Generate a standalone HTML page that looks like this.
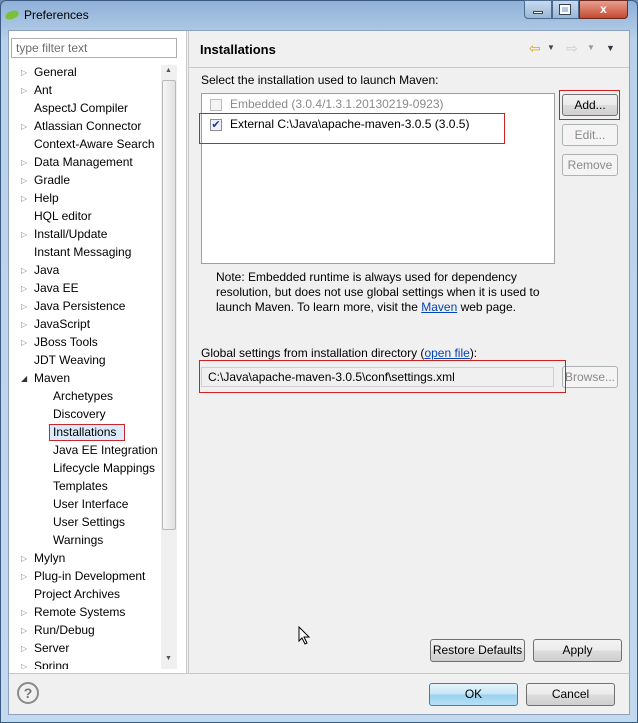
<!DOCTYPE html>
<html><head><style>
*{margin:0;padding:0;box-sizing:border-box}
body{width:638px;height:723px;overflow:hidden;font-family:"Liberation Sans",sans-serif;font-size:12px;color:#000;background:#6d8fb8;position:relative}
.frame{position:absolute;left:0;top:0;width:638px;height:723px;background:linear-gradient(#8fb0d8,#b9d1ea 40px,#c4d8ee);border:1px solid #3b5a82;border-radius:6px 6px 0 0}
.title{position:absolute;left:24px;top:8px;font-size:12px;color:#000}
.client{position:absolute;left:8px;top:30px;width:622px;height:685px;background:#f0f0f0;border:1px solid #8da2c0}
.abs{position:absolute}
.tree{left:0;top:0;width:178px;height:642px;background:#fff;border-right:1px solid #c8c8c8}
.row{position:absolute;height:18px;line-height:18px;white-space:nowrap}
.arr{position:absolute;color:#888;font-size:8px}
.btn{position:absolute;border:1px solid #707070;border-radius:3px;background:linear-gradient(#f2f2f2,#ebebeb 50%,#dddddd 51%,#cfcfcf);text-align:center;font-size:12px}
.dis{border-color:#adb2b5;background:#f4f4f4;color:#8a8a8a}
.red{position:absolute;border:1px solid #d02020 !important;background:transparent}
a{color:#0645ad;text-decoration:underline}
</style></head><body>
<div class="frame"></div>
<svg class="abs" style="left:4px;top:9px" width="16" height="12"><ellipse cx="8" cy="6" rx="7" ry="4" fill="#7cbf3a" transform="rotate(-20 8 6)"/></svg>
<div class="title">Preferences</div>
<div class="abs" style="left:524px;top:0;width:28px;height:19px;border:1px solid #4a6a90;border-radius:0 0 0 4px;background:linear-gradient(#c9daee,#9bb6d6)"></div>
<div class="abs" style="left:552px;top:0;width:27px;height:19px;border:1px solid #4a6a90;background:linear-gradient(#c9daee,#9bb6d6)"></div>
<div class="abs" style="left:579px;top:0;width:49px;height:19px;border:1px solid #6a2a20;border-radius:0 0 4px 0;background:linear-gradient(#e8a090,#c44a30);color:#fff;font-weight:bold;text-align:center;line-height:17px">x</div>
<div class="abs" style="left:533px;top:11px;width:10px;height:3px;background:#fff;border:1px solid #345"></div>
<div class="abs" style="left:560px;top:5px;width:10px;height:9px;border:2px solid #fff;outline:1px solid #345"></div>
<div class="client">
 <div class="abs tree"></div>
 <div class="abs" style="left:2px;top:7px;width:166px;height:20px;border:1px solid #abadb3;background:#fff;color:#6d6d6d;padding:2px 4px">type filter text</div>
 <div class="abs" style="left:152px;top:34px;width:16px;height:604px;background:#f0f0f0"></div>
 <div class="abs" style="left:153px;top:49px;width:14px;height:450px;border:1px solid #b8b8b8;border-radius:2px;background:linear-gradient(90deg,#f5f5f5,#e2e2e2)"></div>
 <div class="abs" style="left:156px;top:36px;font-size:7px;color:#555">▲</div>
 <div class="abs" style="left:156px;top:624px;font-size:7px;color:#555">▼</div>
 <div class="abs" style="left:0;top:34px;width:152px;height:604px;overflow:hidden">
 <div class="arr" style="left:12px;top:3px">▷</div><div class="row" style="left:25px;top:-2px">General</div>
 <div class="arr" style="left:12px;top:21px">▷</div><div class="row" style="left:25px;top:16px">Ant</div>
 <div class="row" style="left:25px;top:34px">AspectJ Compiler</div>
 <div class="arr" style="left:12px;top:57px">▷</div><div class="row" style="left:25px;top:52px">Atlassian Connector</div>
 <div class="row" style="left:25px;top:70px">Context-Aware Search</div>
 <div class="arr" style="left:12px;top:93px">▷</div><div class="row" style="left:25px;top:88px">Data Management</div>
 <div class="arr" style="left:12px;top:111px">▷</div><div class="row" style="left:25px;top:106px">Gradle</div>
 <div class="arr" style="left:12px;top:129px">▷</div><div class="row" style="left:25px;top:124px">Help</div>
 <div class="row" style="left:25px;top:142px">HQL editor</div>
 <div class="arr" style="left:12px;top:165px">▷</div><div class="row" style="left:25px;top:160px">Install/Update</div>
 <div class="row" style="left:25px;top:178px">Instant Messaging</div>
 <div class="arr" style="left:12px;top:201px">▷</div><div class="row" style="left:25px;top:196px">Java</div>
 <div class="arr" style="left:12px;top:219px">▷</div><div class="row" style="left:25px;top:214px">Java EE</div>
 <div class="arr" style="left:12px;top:237px">▷</div><div class="row" style="left:25px;top:232px">Java Persistence</div>
 <div class="arr" style="left:12px;top:255px">▷</div><div class="row" style="left:25px;top:250px">JavaScript</div>
 <div class="arr" style="left:12px;top:273px">▷</div><div class="row" style="left:25px;top:268px">JBoss Tools</div>
 <div class="row" style="left:25px;top:286px">JDT Weaving</div>
 <div class="arr" style="left:12px;top:309px;color:#333">◢</div><div class="row" style="left:25px;top:304px">Maven</div>
 <div class="row" style="left:44px;top:322px">Archetypes</div>
 <div class="row" style="left:44px;top:340px">Discovery</div>
 <div class="abs" style="left:40px;top:359px;width:76px;height:17px;background:#dcebfc;border:1px solid #c8282d"></div>
 <div class="row" style="left:44px;top:358px">Installations</div>
 <div class="row" style="left:44px;top:376px">Java EE Integration</div>
 <div class="row" style="left:44px;top:394px">Lifecycle Mappings</div>
 <div class="row" style="left:44px;top:412px">Templates</div>
 <div class="row" style="left:44px;top:430px">User Interface</div>
 <div class="row" style="left:44px;top:448px">User Settings</div>
 <div class="row" style="left:44px;top:466px">Warnings</div>
 <div class="arr" style="left:12px;top:489px">▷</div><div class="row" style="left:25px;top:484px">Mylyn</div>
 <div class="arr" style="left:12px;top:507px">▷</div><div class="row" style="left:25px;top:502px">Plug-in Development</div>
 <div class="row" style="left:25px;top:520px">Project Archives</div>
 <div class="arr" style="left:12px;top:543px">▷</div><div class="row" style="left:25px;top:538px">Remote Systems</div>
 <div class="arr" style="left:12px;top:561px">▷</div><div class="row" style="left:25px;top:556px">Run/Debug</div>
 <div class="arr" style="left:12px;top:579px">▷</div><div class="row" style="left:25px;top:574px">Server</div>
 <div class="arr" style="left:12px;top:597px">▷</div><div class="row" style="left:25px;top:592px">Spring</div>
 </div>
 <div class="abs" style="left:179px;top:0;width:443px;height:642px;border-left:1px solid #c8c8c8"></div>
 <div class="abs" style="left:191px;top:11px;font-weight:bold;font-size:13px">Installations</div>
 <div class="abs" style="left:180px;top:36px;width:440px;height:1px;background:#c8c8c8"></div>
 <div class="abs" style="left:520px;top:9px;color:#e0a800;font-size:14px">⇦</div>
 <div class="abs" style="left:538px;top:12px;font-size:8px;color:#444">▼</div>
 <div class="abs" style="left:557px;top:9px;color:#ccc;font-size:14px">⇨</div>
 <div class="abs" style="left:578px;top:12px;font-size:8px;color:#999">▼</div>
 <div class="abs" style="left:597px;top:12px;font-size:9px;color:#334">▼</div>
 <div class="abs" style="left:192px;top:42px">Select the installation used to launch Maven:</div>
 <div class="abs" style="left:192px;top:62px;width:354px;height:171px;background:#fff;border:1px solid #a0a0a0"></div>
 <div class="abs" style="left:201px;top:68px;width:12px;height:12px;border:1px solid #bbb;background:#f4f4f4"></div>
 <div class="abs" style="left:221px;top:66px;color:#8a8a8a">Embedded (3.0.4/1.3.1.20130219-0923)</div>
 <div class="abs" style="left:201px;top:88px;width:12px;height:12px;border:1px solid #8f8f8f;background:#eef;color:#1a3a8a;font-size:11px;line-height:10px;text-align:center">✔</div>
 <div class="abs" style="left:221px;top:86px">External C:\Java\apache-maven-3.0.5 (3.0.5)</div>
 <div class="red" style="left:190px;top:82px;width:306px;height:31px"></div>
 <div class="btn" style="left:553px;top:63px;width:56px;height:22px;line-height:20px">Add...</div>
 <div class="red" style="left:550px;top:59px;width:61px;height:30px"></div>
 <div class="btn dis" style="left:553px;top:93px;width:56px;height:22px;line-height:20px">Edit...</div>
 <div class="btn dis" style="left:553px;top:123px;width:56px;height:22px;line-height:20px">Remove</div>
 <div class="abs" style="left:207px;top:239px;line-height:15px">Note: Embedded runtime is always used for dependency<br>resolution, but does not use global settings when it is used to<br>launch Maven. To learn more, visit the <a>Maven</a> web page.</div>
 <div class="abs" style="left:192px;top:315px">Global settings from installation directory (<a>open file</a>):</div>
 <div class="abs" style="left:192px;top:336px;width:353px;height:20px;border:1px solid #d0d0d0;background:#f0f0f0;padding:2px 6px">C:\Java\apache-maven-3.0.5\conf\settings.xml</div>
 <div class="btn dis" style="left:553px;top:335px;width:56px;height:22px;line-height:20px">Browse...</div>
 <div class="red" style="left:190px;top:329px;width:367px;height:33px"></div>
 <svg class="abs" style="left:289px;top:595px" width="14" height="20"><path d="M1 1 L1 15 L4 12 L7 18 L9 17 L6 11 L11 11 Z" fill="#fff" stroke="#000"/></svg>
 <div class="btn" style="left:421px;top:608px;width:95px;height:23px;line-height:21px">Restore Defaults</div>
 <div class="btn" style="left:524px;top:608px;width:89px;height:23px;line-height:21px">Apply</div>
 <div class="abs" style="left:0;top:642px;width:622px;height:1px;background:#c8c8c8"></div>
 <div class="abs" style="left:8px;top:651px;width:22px;height:22px;border-radius:50%;border:2px solid #8a8a8a;color:#777;font-weight:bold;text-align:center;line-height:18px;font-size:14px">?</div>
 <div class="btn" style="left:420px;top:652px;width:89px;height:23px;line-height:21px;border-color:#3c7fb1;background:linear-gradient(#e5f4fc,#c4e5f6 50%,#98d1ef 51%,#b6e0f5)">OK</div>
 <div class="btn" style="left:517px;top:652px;width:89px;height:23px;line-height:21px">Cancel</div>
</div>
</body></html>
